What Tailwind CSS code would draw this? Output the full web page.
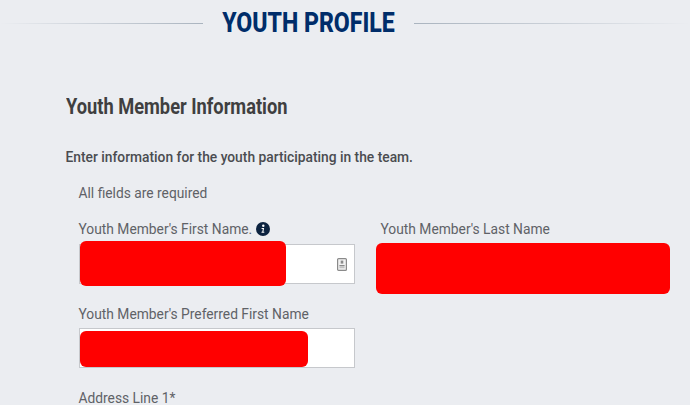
<!DOCTYPE html>
<html lang="en">
<head>
  <meta charset="UTF-8" />
  <meta name="viewport" content="width=device-width, initial-scale=1.0" />
  <title>Youth Profile</title>
  <script src="https://cdn.jsdelivr.net/npm/@tailwindcss/browser@4"></script>
</head>
<body class="bg-[#ebedf1] font-['Roboto',sans-serif] text-[13.8px] text-[#5f6267] h-[405px] overflow-hidden">

  <!-- Title -->
  <div class="flex items-center h-[46px]">
    <div class="w-[203px] h-px bg-gradient-to-r from-[#ebedf1] to-[#aab4bf]"></div>
    <h1 class="w-[211px] text-center text-[27px] leading-[46px] font-extrabold text-[#002d6a] whitespace-nowrap scale-x-[0.855]">YOUTH PROFILE</h1>
    <div class="flex-1 h-px bg-gradient-to-r from-[#aab4bf] to-[#ebedf1]"></div>
  </div>

  <div class="pl-[65.5px]">
    <h2 class="mt-[47px] text-[22px] leading-[28px] font-bold text-[#3f3f40] origin-left scale-x-[0.83] whitespace-nowrap">Youth Member Information</h2>
    <p class="mt-[26px] leading-[20px] font-medium text-[#4a4c50]">Enter information for the youth participating in the team.</p>

    <div class="pl-[13px]">
      <p class="mt-[16px] leading-[20px]">All fields are required</p>

      <div class="mt-[16px] flex">
        <!-- First name -->
        <div class="w-[276px]">
          <label class="flex items-center gap-[4px] leading-[20px]">Youth Member's First Name.
            <svg class="w-[14px] h-[14px]" viewBox="0 0 14 14"><circle cx="7" cy="7" r="7" fill="#0c2340"/><circle cx="7.3" cy="3.8" r="1.2" fill="#fff"/><path d="M5.6 6h2.5l-.7 3.8h.9v1H5.5v-1h.8l.5-2.8H5.6z" fill="#fff"/></svg>
          </label>
          <div class="relative mt-[5px] h-[40px] bg-white border border-[#c6c8cc]">
            <div class="absolute left-0 top-[-4px] w-[206px] h-[45px] bg-[#ff0000] rounded-[6px]"></div>
            <svg class="absolute right-[7px] top-[13px] w-[10px] h-[13px]" viewBox="0 0 10 13"><rect x=".6" y=".6" width="8.8" height="11.8" rx="1" fill="#f2f2f2" stroke="#8a8a8a" stroke-width="1.2"/><rect x="3.7" y="2.6" width="2.6" height="3" fill="#8a8a8a"/><rect x="2.4" y="7" width="5.2" height="1.4" fill="#8a8a8a"/><rect x="2.4" y="9.2" width="5.2" height="1" fill="#b5b5b5"/></svg>
          </div>
        </div>
        <!-- Last name -->
        <div class="ml-[21px] w-[294.5px]">
          <label class="block pl-[5px] leading-[20px]">Youth Member's Last Name</label>
          <div class="mt-[4px] h-[51px] bg-[#ff0000] rounded-[6px]"></div>
        </div>
      </div>

      <!-- Preferred name -->
      <div class="mt-[10px] w-[276px]">
        <label class="block leading-[20px]">Youth Member's Preferred First Name</label>
        <div class="mt-[4px] h-[40px] bg-white border border-[#c6c8cc] pt-[2px]">
          <div class="w-[228px] h-[36px] bg-[#ff0000] rounded-[6px]"></div>
        </div>
      </div>

      <label class="block mt-[20px] leading-[20px]">Address Line 1*</label>
    </div>
  </div>

</body>
</html>
